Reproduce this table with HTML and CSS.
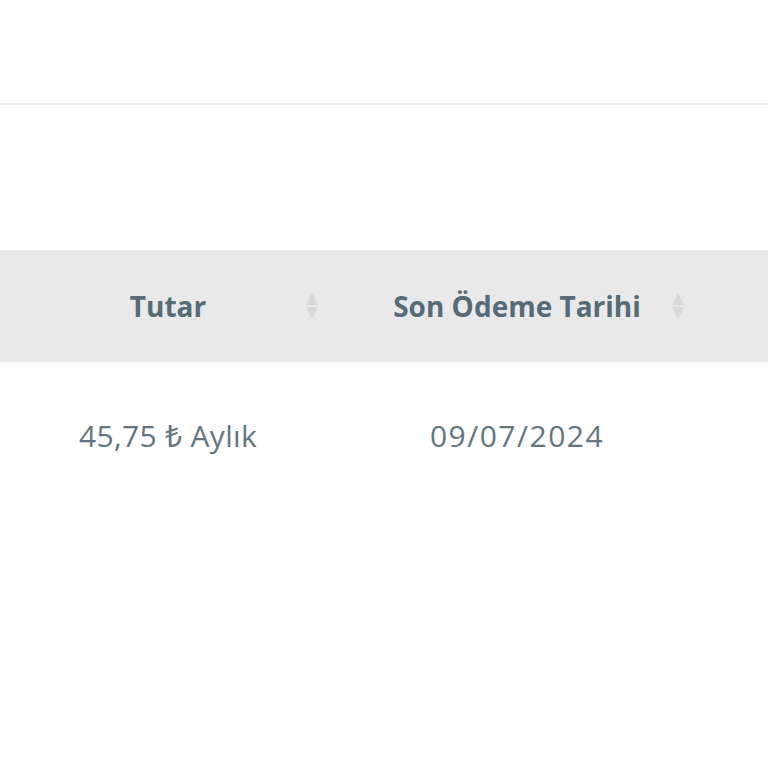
FILE: index.html
```html
<!DOCTYPE html>
<html lang="tr">
<head>
<meta charset="utf-8">
<link rel="stylesheet" href="styles.css">
</head>
<body>
<div class="topbar"></div>
<div class="table">
  <div class="head">
    <div class="cell col1"><span class="label">Tutar</span><span class="sort"></span></div>
    <div class="cell col2"><span class="label">Son Ödeme Tarihi</span><span class="sort"></span></div>
  </div>
  <div class="row">
    <div class="cell col1 amount">45,75 ₺ Aylık</div>
    <div class="cell col2 date">09/07/2024</div>
  </div>
</div>
</body>
</html>
```
FILE: styles.css
```css
html, body {
  margin: 0;
  padding: 0;
  background: #fff;
  font-family: "Open Sans", "Noto Sans", sans-serif;
}
.topbar {
  height: 103px;
  border-bottom: 2px solid #ececec;
}
.table {
  margin-top: 145px;
}
.head {
  display: grid;
  grid-template-columns: 336px 368px 1fr;
  height: 112px;
  background: #e9e9e9;
  color: #566b78;
  font-weight: 700;
  font-size: 28px;
}
.row {
  display: grid;
  grid-template-columns: 336px 368px 1fr;
  height: 146px;
  color: #63767f;
  font-size: 30px;
}
.amount { letter-spacing: 0.3px; }
.date { letter-spacing: 1.5px; }
.cell {
  position: relative;
  display: flex;
  align-items: center;
  justify-content: center;
}
.head .col2 { padding-right: 6px; }
.row .col2 { padding-right: 6px; }
.sort {
  position: absolute;
  top: 50%;
  width: 14px;
  height: 30px;
  margin-top: -15px;
}
.col1 .sort { left: 305px; }
.col2 .sort { left: 335px; }
.sort::before, .sort::after {
  content: "";
  position: absolute;
  left: 1px;
  border-left: 6px solid transparent;
  border-right: 6px solid transparent;
}
.sort::before {
  top: 2px;
  border-bottom: 12px solid #d8d8d8;
}
.sort::after {
  bottom: 2px;
  border-top: 12px solid #d8d8d8;
}
```
